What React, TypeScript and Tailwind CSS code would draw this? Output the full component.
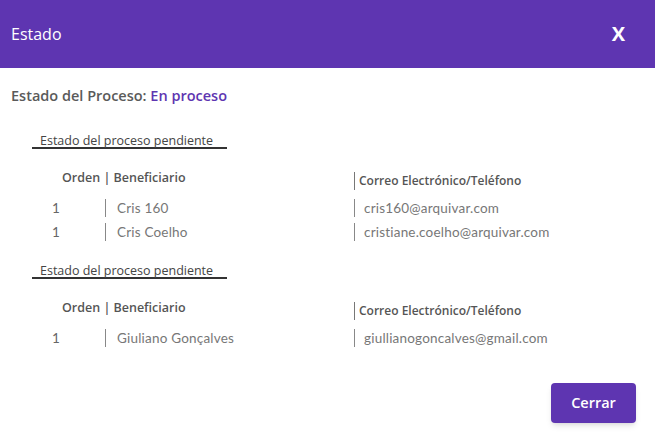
const sections = [
  {
    rows: [
      { order: '1', name: 'Cris 160', contact: 'cris160@arquivar.com' },
      { order: '1', name: 'Cris Coelho', contact: 'cristiane.coelho@arquivar.com' },
    ],
  },
  {
    rows: [{ order: '1', name: 'Giuliano Gonçalves', contact: 'giullianogoncalves@gmail.com' }],
  },
];

function Section({ rows }: { rows: { order: string; name: string; contact: string }[] }) {
  return (
    <div>
      <div className="pl-[32px]">
        <span className="inline-block w-[195px] border-b-2 border-[#333] pl-[8px] text-[12.5px] leading-[13px] text-[#444]">
          Estado del proceso pendiente
        </span>
      </div>
      <div className="mt-[18px] flex items-end text-[12.5px] font-semibold text-[#555]">
        <div className="w-[354px] pl-[62px] leading-[18px]">Orden | Beneficiario</div>
        <div className="translate-y-[3px] border-l border-[#777] pl-[4px] text-[12px] leading-[18px]">Correo Electrónico/Teléfono</div>
      </div>
      <div className="mt-[12px] flex flex-col gap-[6px] text-[13.5px] tracking-[0.2px] text-[#777] [font-family:Lato,'Noto_Sans',sans-serif]">
        {rows.map((r) => (
          <div key={r.contact} className="flex h-[18px] items-center">
            <div className="w-[105px] pl-[52px] leading-[18px] text-[#666]">{r.order}</div>
            <div className="h-[18px] w-[249px] border-l border-[#888] pl-[11px] leading-[18px]">{r.name}</div>
            <div className="h-[18px] border-l border-[#888] pl-[9px] leading-[18px]">{r.contact}</div>
          </div>
        ))}
      </div>
    </div>
  );
}

export default function App() {
  return (
    <div className="h-[436px] w-[655px] overflow-hidden bg-white [font-family:'Open_Sans',sans-serif]">
      <div className="flex h-[68px] items-center justify-between bg-[#5e35b1] pl-[11px] pr-[30px] text-white">
        <span className="text-[16px]">Estado</span>
        <span className="text-[20px] font-bold">X</span>
      </div>
      <div className="mt-[17px] pl-[11px] text-[14.5px] font-semibold text-[#5a5a5a]">
        Estado del Proceso: <span className="text-[#5e35b1]">En proceso</span>
      </div>
      <div className="mt-[20px] flex flex-col gap-[16px]">
        {sections.map((s, i) => (
          <Section key={i} rows={s.rows} />
        ))}
      </div>
      <div className="mt-[36px] flex justify-end pr-[19px]">
        <button className="h-[40px] w-[85px] rounded-[4px] bg-[#5e35b1] text-[14.5px] font-semibold text-white shadow-md">
          Cerrar
        </button>
      </div>
    </div>
  );
}
